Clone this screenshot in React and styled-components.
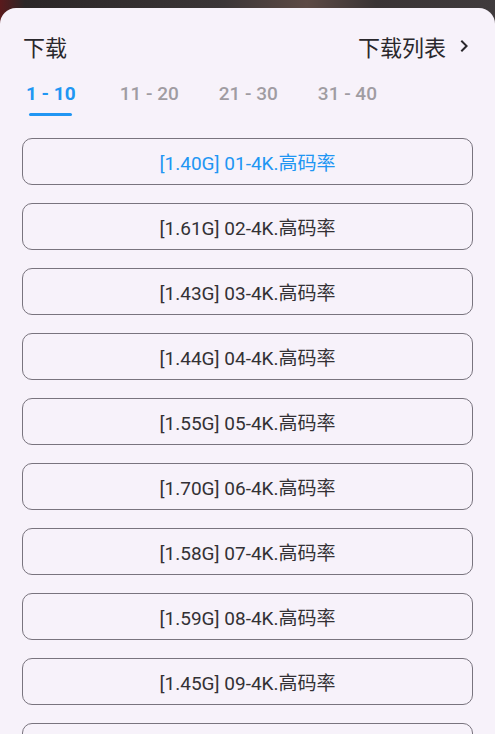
import React from "react";
import styled, { createGlobalStyle } from "styled-components";

const Global = createGlobalStyle`
  html, body { margin: 0; padding: 0; }
  body { background: #2e2a2c; font-family: Roboto, "Noto Sans CJK SC", sans-serif; }
`;

const Screen = styled.div`
  width: 495px;
  height: 734px;
  overflow: hidden;
  display: flex;
  flex-direction: column;
  background: linear-gradient(90deg, #5a1a1c 0%, #2b2627 5%, #3b3637 45%, #5d4a45 62%, #3a3435 76%, #403b3d 100%);
`;

const Backdrop = styled.div`
  height: 8px;
  flex: none;
`;

const Sheet = styled.div`
  flex: 1;
  background: #f7f2fa;
  border-radius: 16px 16px 0 0;
  padding-top: 22px;
  display: flex;
  flex-direction: column;
`;

const Header = styled.div`
  display: flex;
  align-items: center;
  justify-content: space-between;
  height: 32px;
  padding: 0 19px 0 23px;
`;

const Title = styled.div`
  font-size: 22px;
  color: #2a282c;
`;

const ListLink = styled.div`
  display: flex;
  align-items: center;
  gap: 6px;
  font-size: 22px;
  color: #2a282c;
`;

const Tabs = styled.div`
  display: flex;
  gap: 40px;
  margin-top: 21px;
  padding-left: 26px;
`;

const Tab = styled.div`
  display: flex;
  flex-direction: column;
  align-items: center;
  font-size: 19px;
  font-weight: ${(p) => (p.$active ? 700 : 500)};
  color: ${(p) => (p.$active ? "#2196f3" : "#a09ca2")};
  line-height: 22px;
  margin-right: ${(p) => (p.$active ? "4px" : "0")};
`;

const Underline = styled.div`
  margin-top: 8px;
  width: 43px;
  height: 3px;
  border-radius: 2px;
  background: ${(p) => (p.$active ? "#2196f3" : "transparent")};
`;

const List = styled.div`
  display: flex;
  flex-direction: column;
  gap: 18px;
  margin-top: 22px;
  padding: 0 22px;
`;

const Item = styled.div`
  height: 47px;
  box-sizing: border-box;
  border: 1.3px solid #79747e;
  border-radius: 10px;
  display: flex;
  align-items: center;
  justify-content: center;
  font-size: 19px;
  color: ${(p) => (p.$active ? "#2196f3" : "#333135")};
  flex: none;
`;

const sizes = ["1.40", "1.61", "1.43", "1.44", "1.55", "1.70", "1.58", "1.59", "1.45", "1.52"];

export default function App() {
  return (
    <>
      <Global />
      <Screen>
        <Backdrop />
        <Sheet>
          <Header>
            <Title>下载</Title>
            <ListLink>
              下载列表
              <svg width="24" height="24" viewBox="0 0 24 24" fill="#2a282c">
                <path d="M10 6 8.59 7.41 13.17 12l-4.58 4.59L10 18l6-6z" />
              </svg>
            </ListLink>
          </Header>
          <Tabs>
            {["1 - 10", "11 - 20", "21 - 30", "31 - 40"].map((t, i) => (
              <Tab key={t} $active={i === 0}>
                {t}
                <Underline $active={i === 0} />
              </Tab>
            ))}
          </Tabs>
          <List>
            {sizes.map((s, i) => (
              <Item key={i} $active={i === 0}>
                [{s}G] {String(i + 1).padStart(2, "0")}-4K.高码率
              </Item>
            ))}
          </List>
        </Sheet>
      </Screen>
    </>
  );
}
